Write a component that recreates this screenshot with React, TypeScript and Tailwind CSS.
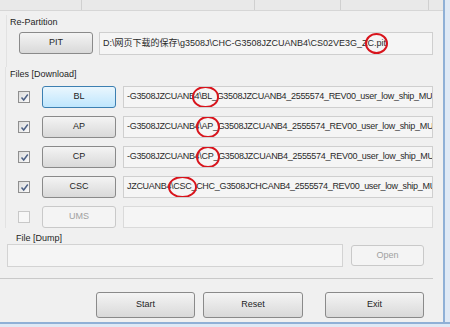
import React from "react";

const font = { fontFamily: '"Liberation Sans", "Noto Sans CJK SC", sans-serif' };

function Btn({
  label,
  className = "",
  hot = false,
  disabled = false,
}: {
  label: string;
  className?: string;
  hot?: boolean;
  disabled?: boolean;
}) {
  return (
    <div
      className={
        "flex items-center justify-center rounded-[3px] border text-[9px] " +
        (hot
          ? "border-[#3c7fb1] bg-gradient-to-b from-[#eaf6fd] to-[#bee6fd] text-[#1e1e1e] "
          : disabled
            ? "border-[#c9c9c9] bg-[#f4f4f4] text-[#a0a0a0] "
            : "border-[#8a8a8a] bg-gradient-to-b from-[#f4f4f4] to-[#d9d9d9] text-[#1e1e1e] ") +
        className
      }
    >
      {label}
    </div>
  );
}

function Field({ className = "", children }: { className?: string; children?: React.ReactNode }) {
  return (
    <div
      className={
        "flex items-center overflow-hidden whitespace-nowrap border border-[#cfcfcf] bg-[#f5f5f5] pl-[3px] text-[9px] text-[#2a2a2a] " +
        className
      }
    >
      {children}
    </div>
  );
}

// text with a red hand-drawn ring over it
function Ringed({ text, ring }: { text: string; ring: string }) {
  return (
    <span className="relative">
      {text}
      <span className={"absolute rounded-[50%] border-2 border-[#d8141c] " + ring} />
    </span>
  );
}

function Check({ on }: { on: boolean }) {
  return (
    <div
      className={
        "flex h-[12px] w-[12px] items-center justify-center border " +
        (on ? "border-[#8f8f8f] bg-gradient-to-br from-[#dcdcdc] to-[#fbfbfb]" : "border-[#c8c8c8] bg-[#f7f7f7]")
      }
    >
      {on && (
        <svg width="9" height="9" viewBox="0 0 9 9">
          <path d="M1.5 4.5 L3.7 7 L7.8 1.5" fill="none" stroke="#4d6185" strokeWidth="1.5" />
        </svg>
      )}
    </div>
  );
}

const rows = [
  { name: "BL", pre: "-G3508JZCUANB4", mark: "\\BL_", post: "G3508JZCUANB4_2555574_REV00_user_low_ship_MULTI", ring: "-left-[7px] -right-[2px]", hot: true },
  { name: "AP", pre: "-G3508JZCUANB4", mark: "\\AP_", post: "G3508JZCUANB4_2555574_REV00_user_low_ship_MULTI", ring: "-left-[3px] -right-[2px]" },
  { name: "CP", pre: "-G3508JZCUANB4", mark: "\\CP_", post: "G3508JZCUANB4_2555574_REV00_user_low_ship_MULTI", ring: "-left-[3px] -right-[2px]" },
  { name: "CSC", pre: "JZCUANB4", mark: "\\CSC_", post: "CHC_G3508JCHCANB4_2555574_REV00_user_low_ship_MULTI", ring: "-left-[3px] -right-[1px]" },
];

export default function App() {
  return (
    <div className="flex h-[327px] w-[450px] flex-col overflow-hidden bg-[#f0f0f0]" style={font}>
      <div className="flex flex-1">
        <div className="flex w-[443px] flex-col">
          {/* top strip */}
          <div className="flex h-[11px] border-b border-[#d6d6d6] bg-[#e9e9e9]">
            <div className="w-[82px] border-r border-[#d0d0d0]" />
            <div className="w-[173px] border-r border-[#d0d0d0]" />
            <div className="w-[86px] border-r border-[#d0d0d0]" />
            <div className="w-[88px] border-r border-[#d0d0d0]" />
          </div>

          {/* Re-Partition */}
          <div className="ml-[6px] mr-[8px] mt-[4px] flex flex-col border-l border-[#e2e2e2] pb-[12px]">
            <div className="ml-[3px] text-[9px] leading-[14px] text-[#1e1e1e]">Re-Partition</div>
            <div className="mt-[3px] flex">
              <Btn label="PIT" className="ml-[12px] h-[22px] w-[74px]" />
              <Field className="ml-[6px] h-[23px] w-[334px]">
                D:\网页下载的保存\g3508J\CHC-G3508JZCUANB4\CS02VE3G_Z
                <Ringed text="C.pit" ring="-left-[3px] -right-[2px] -top-[4px] -bottom-[4px]" />
              </Field>
            </div>
          </div>

          {/* Files [Download] */}
          <div className="ml-[5px] mr-[8px] flex flex-col border-l border-[#e2e2e2]">
            <div className="ml-[4px] text-[9px] leading-[14px] text-[#1e1e1e]">Files [Download]</div>
            <div className="mt-[5px] flex flex-col gap-[8px]">
              {rows.map((r) => (
                <div key={r.name} className="flex items-center">
                  <div className="ml-[12px]">
                    <Check on />
                  </div>
                  <Btn label={r.name} hot={r.hot} className="ml-[12px] h-[22px] w-[74px]" />
                  <Field className="ml-[7px] h-[22px] w-[310px] tracking-[-0.3px]">
                    {r.pre}
                    <Ringed text={r.mark} ring={r.ring + " -top-[4px] -bottom-[4px]"} />
                    {r.post}
                  </Field>
                </div>
              ))}
              <div className="flex items-center">
                <div className="ml-[12px]">
                  <Check on={false} />
                </div>
                <Btn label="UMS" disabled className="ml-[12px] h-[22px] w-[74px]" />
                <Field className="ml-[7px] h-[22px] w-[310px] border-[#dadada]" />
              </div>
            </div>
          </div>

          {/* File [Dump] */}
          <div className="ml-[7px] mr-[8px] mt-[4px] flex flex-col">
            <div className="ml-[9px] text-[9px] leading-[12px] text-[#1e1e1e]">File [Dump]</div>
            <div className="flex items-center">
              <Field className="h-[23px] w-[336px] border-[#d3d3d3]" />
              <Btn label="Open" disabled className="ml-[8px] h-[21px] w-[73px]" />
            </div>
          </div>

          <div className="mr-[10px] mt-[11px] border-t border-[#c9c9c9]" />

          <div className="mt-[13px] flex">
            <Btn label="Start" className="ml-[96px] h-[26px] w-[99px]" />
            <Btn label="Reset" className="ml-[8px] h-[26px] w-[100px]" />
            <Btn label="Exit" className="ml-[22px] h-[26px] w-[99px]" />
          </div>
        </div>
        <div className="flex-1 border-l-2 border-[#8fb0d6] bg-[#dfe9f5]" />
      </div>
      <div className="h-[5px] border-t-2 border-[#8fb0d6] bg-[#dfe9f5]" />
    </div>
  );
}
